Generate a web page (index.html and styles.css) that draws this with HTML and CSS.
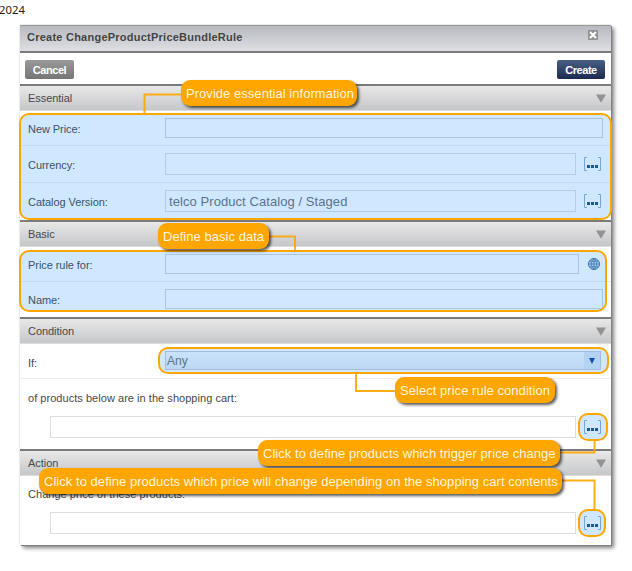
FILE: index.html
```
<!DOCTYPE html>
<html lang="en">
<head>
<meta charset="utf-8">
<title>Create ChangeProductPriceBundleRule</title>
<link rel="stylesheet" href="styles.css">
</head>
<body>
<svg class="defs" width="0" height="0" aria-hidden="true">
  <symbol id="pick" viewBox="0 0 17 15"><path d="M3 .5H.5v13H3M14 .5h2.500v13H14" fill="none" stroke="#93afc9"/><path d="M3 8h3v3H3zM7 8h3v3H7zM11 8h3v3h-3z" fill="#284f77"/></symbol>
  <symbol id="down" viewBox="0 0 10 9"><path d="M0 .5h10L5 8.700z" fill="#929292"/></symbol>
</svg>
<p class="year">2024</p>
<main class="dialog">
  <header class="titlebar">
    <h1 class="title">Create ChangeProductPriceBundleRule</h1>
    <svg class="close" viewBox="0 0 10 10"><rect width="10" height="10" rx="1" fill="#929292"/><path d="M2 2l6 6M8 2l-6 6" stroke="#fff" stroke-width="2"/></svg>
  </header>
  <div class="toolbar"><button class="btn">Cancel</button><button class="btn primary">Create</button></div>

  <section class="section essential">
    <h2 class="bar">Essential<svg class="arrow"><use href="#down"/></svg></h2>
    <div class="row first"><label>New Price:</label><div class="input"></div></div>
    <div class="row currency"><label>Currency:</label><div class="input tall"></div><svg class="pick"><use href="#pick"/></svg></div>
    <div class="row catalog"><label>Catalog Version:</label><div class="input tall">telco Product Catalog / Staged</div><svg class="pick"><use href="#pick"/></svg></div>
  </section>

  <section class="section basic">
    <h2 class="bar">Basic<svg class="arrow"><use href="#down"/></svg></h2>
    <div class="row first"><label>Price rule for:</label><div class="input"></div>
      <svg class="globe" viewBox="0 0 12 12"><circle cx="6" cy="6" r="5.5" fill="#c3d8ec" stroke="#4a7096"/><path d="M6 .5v11M.5 6h11M1.500 3.300h9M1.500 8.700h9M6 .5C2.600 3 2.600 9 6 11.500M6 .5c3.400 2.500 3.400 8.500 0 11" fill="none" stroke="#4a7096" stroke-width=".7"/></svg></div>
    <div class="row name"><label>Name:</label><div class="input"></div></div>
  </section>

  <section class="section condition">
    <h2 class="bar">Condition<svg class="arrow"><use href="#down"/></svg></h2>
    <div class="row if"><label>If:</label><div class="select"><span>Any</span><i class="drop"><svg viewBox="0 0 6 6" width="6" height="6"><path d="M0 0h6L3 6z" fill="#16449b"/></svg></i></div></div>
    <p class="caption cart">of products below are in the shopping cart:</p>
    <div class="list"><div class="input tall"></div><svg class="pick"><use href="#pick"/></svg></div>
  </section>

  <section class="section action">
    <h2 class="bar">Action<svg class="arrow"><use href="#down"/></svg></h2>
    <p class="caption change">Change price of these products:</p>
    <div class="list"><div class="input tall"></div><svg class="pick"><use href="#pick"/></svg></div>
  </section>
</main>

<div class="mark m-essential"></div>
<div class="mark m-basic"></div>
<div class="mark m-if"></div>
<div class="mark m-cart"></div>
<div class="mark m-change"></div>
<svg class="lines" viewBox="0 0 632 571"><path d="M182 94.500h-37.500V113M269 236.500h26V250M396 391h-40v-18M560 452.500h34.500V440M562 480.500h32.500V509"/></svg>
<div class="note n-essential"><span>Provide essential information</span></div>
<div class="note n-basic"><span>Define basic data</span></div>
<div class="note n-if"><span>Select price rule condition</span></div>
<div class="note n-cart"><span>Click to define products which trigger price change</span></div>
<div class="note n-change"><span>Click to define products which price will change depending on the shopping cart contents</span></div>
</body>
</html>
```
FILE: styles.css
```
* { box-sizing: border-box; }
body { margin: 0; height: 571px; position: relative; overflow: hidden; background: #fff; color: #484848; font: 11px/14px "Liberation Sans", sans-serif; }
.defs { position: absolute; }
.year { margin: 0 0 0 -1px; height: 25px; padding-top: 3px; color: #222; font: 11.3px/14px "Noto Sans", sans-serif; }
.dialog { width: 591px; height: 520px; margin-left: 20px; background: #fff; box-shadow: 0 0 1px #aaa, 1px 1px 0 #777, 3px 3px 4px rgba(0,0,0,.5); }
.titlebar { height: 28px; display: flex; justify-content: space-between; padding: 4px 13px 0 7px; border-top: 1px solid #999; border-bottom: 2px solid #7b7b7b; background: linear-gradient(#b8bac0, #dedfe3); }
.title { margin: 0; font-size: 11px; line-height: 14px; letter-spacing: .24px; color: #444; white-space: nowrap; }
.close { width: 10px; height: 10px; }
.toolbar { height: 31px; display: flex; justify-content: space-between; padding: 7px 6px 0 5px; }
.btn { width: 49px; height: 19px; padding: 0; border: 0; border-radius: 2px; background: linear-gradient(#9a9a9a, #757575); color: #fff; font: bold 11px/18px "Liberation Sans", sans-serif; letter-spacing: -.45px; }
.primary { width: 48px; background: linear-gradient(#4a5f84, #1b2b4f); }
.bar { margin: 0; height: 27px; display: flex; justify-content: space-between; align-items: center; padding: 0 5px 1px 8px; border-top: 2px solid #7b7b7b; border-bottom: 1px solid #ddd; background: linear-gradient(#e8e8e8, #c6c7c9); font-size: 11px; font-weight: normal; letter-spacing: -.05px; }
.arrow { width: 10px; height: 9px; margin-top: 2px; }
.essential { height: 136px; }
.basic { height: 97px; }
.condition { height: 132px; }
.row { display: flex; align-items: flex-start; height: 37px; padding: 7px 8px 0; border-bottom: 1px solid #eee; }
.row label { width: 137px; flex: none; padding-top: 4px; letter-spacing: -.06px; }
.row.first { height: 35px; }
.catalog, .name { border: 0; }
.input { flex: 1; height: 20px; border: 1px solid #d4d4d4; }
.tall { height: 22px; padding: 0 3px; font-size: 13px; line-height: 22px; letter-spacing: .07px; color: #707070; border-color: #ddd; }
.currency label, .catalog label { padding-top: 5px; }
.pick { width: 17px; height: 15px; margin: 4px 2px 0 8px; }
.globe { width: 12px; height: 12px; margin: 4px 3px 0 9px; }
.if { height: 35px; padding-right: 10px; }
.if label { padding-top: 5px; }
.select { flex: 1; height: 19px; margin-right: 0; display: flex; justify-content: space-between; border: 1px solid #c9cbd0; background: linear-gradient(#f8f9fc, #e8eaf0); color: #707070; font-size: 12px; line-height: 19px; padding-left: 1px; }
.drop { width: 16px; display: flex; align-items: center; justify-content: center; background: #dde5f0; }
.caption { margin: 0; padding-left: 8px; letter-spacing: .04px; }
.cart { padding-top: 12px; height: 37px; }
.change { padding-top: 11px; height: 36px; }
.list { display: flex; padding: 0 8px 0 30px; }
.mark { position: absolute; border: 2px solid #ffa600; border-radius: 10px; background: rgba(0,128,255,.184); }
.m-essential { left: 19px; top: 113px; width: 593px; height: 107px; }
.m-basic { left: 19px; top: 250px; width: 588px; height: 62px; }
.m-if { left: 158px; top: 347px; width: 451px; height: 27px; }
.m-cart { left: 578px; top: 413px; width: 30px; height: 28px; }
.m-change { left: 578px; top: 509px; width: 28px; height: 28px; }
.lines { position: absolute; left: 0; top: 0; width: 632px; height: 571px; fill: none; stroke: #ffa600; stroke-width: 2px; opacity: .9; }
.note { position: absolute; height: 26px; padding-left: 5px; border-radius: 9px; background: #ffa600; color: #fff5df; font-size: 13px; line-height: 27px; white-space: nowrap; letter-spacing: .04px; box-shadow: 2px 2px 3px rgba(0,0,0,.65); }
.n-essential { left: 181px; top: 80px; width: 176px; }
.n-basic { left: 158px; top: 223px; width: 111px; }
.n-if { left: 395px; top: 377px; width: 160px; }
.n-cart { left: 258px; top: 440px; width: 302px; }
.n-change { left: 39px; top: 468px; width: 523px; }
```
